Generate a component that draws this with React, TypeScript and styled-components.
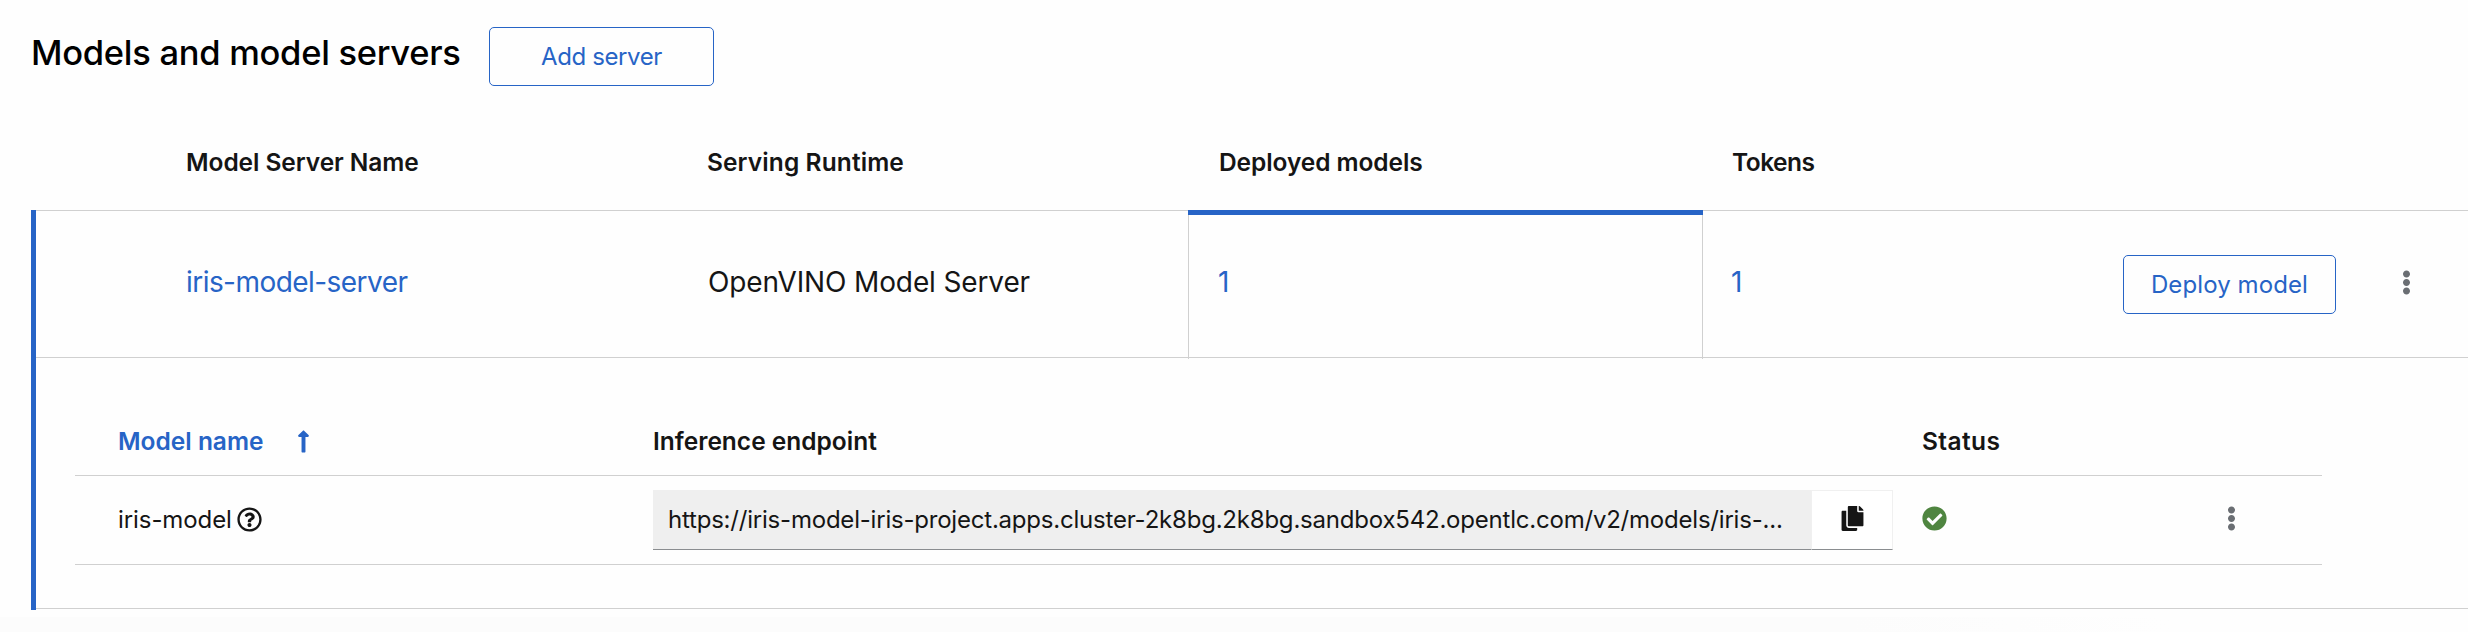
import React from "react";
import styled, { createGlobalStyle } from "styled-components";
import {
  FaCheckCircle,
  FaCopy,
  FaEllipsisV,
  FaLongArrowAltUp,
  FaRegQuestionCircle,
} from "react-icons/fa";

const blue = "#2764c6";
const ink = "#151515";
const rule = "#d0d0d0";

const GlobalStyle = createGlobalStyle`
  *, *::before, *::after { box-sizing: border-box; }
  body {
    margin: 0;
    background: #fefefe;
    color: ${ink};
    font-family: Inter, "Liberation Sans", sans-serif;
    overflow: hidden;
  }
  svg { display: block; flex: none; }
`;

const Page = styled.main`
  display: flex;
  flex-direction: column;
  width: 2468px;
  height: 632px;
`;

const TitleBar = styled.header`
  display: flex;
  align-items: flex-start;
  height: 114px;
  padding: 27px 0 0 31px;
`;

const Title = styled.h2`
  width: 458px;
  margin: 0;
  color: #000;
  font-size: 34.5px;
  font-weight: 500;
  line-height: 51px;
  letter-spacing: -0.28px;
  white-space: nowrap;
`;

const OutlineButton = styled.button<{ $width: number; $spacing?: number }>`
  width: ${(p) => p.$width}px;
  height: 59px;
  padding: 0;
  border: 1px solid ${blue};
  border-radius: 5px;
  background: transparent;
  color: ${blue};
  font: 400 24px/57px Inter, "Liberation Sans", sans-serif;
  letter-spacing: ${(p) => p.$spacing ?? 0}px;
  white-space: nowrap;
`;

const columns = "641px 511px 515px 420px 1fr";

const ServerHead = styled.div`
  display: grid;
  grid-template-columns: ${columns};
  height: 96px;
  padding-left: 36px;
`;

const HeadCell = styled.div<{ $pad?: number; $spacing?: number; $active?: boolean }>`
  display: flex;
  align-items: center;
  padding-left: ${(p) => p.$pad ?? 0}px;
  color: ${(p) => (p.$active ? blue : ink)};
  font-size: 24.5px;
  font-weight: 600;
  line-height: 36px;
  letter-spacing: ${(p) => p.$spacing ?? 0}px;
  white-space: nowrap;
`;

const ServerGroup = styled.section`
  height: 400px;
  margin-left: 31px;
  border-left: 5px solid ${blue};
`;

const ServerRow = styled.div`
  display: grid;
  grid-template-columns: ${columns};
  height: 148px;
  border-top: 1px solid ${rule};
  border-bottom: 1px solid ${rule};
`;

const ServerCell = styled.div<{ $pad: number; $link?: boolean; $spacing?: number }>`
  display: flex;
  align-items: center;
  padding: 0 0 4px ${(p) => p.$pad}px;
  color: ${(p) => (p.$link ? blue : ink)};
  font-size: 28px;
  letter-spacing: ${(p) => p.$spacing ?? 0}px;
  white-space: nowrap;
`;

const SelectedCell = styled(ServerCell)`
  position: relative;
  margin-bottom: -2px;
  padding-bottom: 6px;
  border: solid ${rule};
  border-width: 0 1px;

  &::before {
    content: "";
    position: absolute;
    top: -1px;
    left: -1px;
    right: -1px;
    height: 5px;
    background: ${blue};
  }
`;

const RowActions = styled.div`
  display: flex;
  align-items: center;
`;

const Kebab = styled.div<{ $left?: number }>`
  display: flex;
  padding: 0 0 4px ${(p) => p.$left ?? 0}px;
  color: #6a6e73;
`;

const ModelPanel = styled.div`
  height: 251px;
  padding: 49px 0 0 39px;
  border-bottom: 1px solid ${rule};
`;

const ModelTable = styled.div`
  width: 2247px;
`;

const ModelLine = styled.div<{ $height: number }>`
  display: grid;
  grid-template-columns: 535px 1269px 297px 1fr;
  align-items: center;
  height: ${(p) => p.$height}px;
  padding-left: 43px;
  border-bottom: 1px solid ${rule};
`;

const SortIcon = styled.span`
  display: flex;
  margin-left: 28px;
`;

const ModelName = styled.div`
  display: flex;
  align-items: center;
  gap: 5px;
  padding-bottom: 2px;
  font-size: 24px;
  letter-spacing: -0.08px;
`;

const ClipboardCopy = styled.div`
  display: flex;
  width: 1240px;
  height: 60px;
`;

const Endpoint = styled.div`
  flex: 1;
  padding-left: 15px;
  border-bottom: 1px solid #8a8d90;
  background: #efefef;
  font-size: 24px;
  line-height: 59px;
  letter-spacing: -0.21px;
  white-space: nowrap;
`;

const CopyButton = styled.div`
  display: flex;
  align-items: center;
  justify-content: center;
  width: 82px;
  padding-bottom: 3px;
  border: 1px solid #f0f0f0;
  border-bottom-color: #8a8d90;
  background: #fff;
`;

const Status = styled.div`
  display: flex;
  padding-bottom: 3px;
  color: #4f8540;
`;

const BottomShade = styled.div`
  height: 15px;
  margin-top: 7px;
  background: linear-gradient(90deg, #fcfcfc 75%, #fefefe 88%);
`;

export default function App() {
  return (
    <>
      <GlobalStyle />
      <Page>
        <TitleBar>
          <Title>Models and model servers</Title>
          <OutlineButton $width={225} $spacing={-0.38}>Add server</OutlineButton>
        </TitleBar>

        <ServerHead>
          <HeadCell $pad={150} $spacing={-0.07}>Model Server Name</HeadCell>
          <HeadCell $pad={30} $spacing={0.1}>Serving Runtime</HeadCell>
          <HeadCell $pad={31} $spacing={-0.08}>Deployed models</HeadCell>
          <HeadCell $pad={29} $spacing={-0.5}>Tokens</HeadCell>
        </ServerHead>

        <ServerGroup>
          <ServerRow>
            <ServerCell $pad={150} $link $spacing={-0.55}>iris-model-server</ServerCell>
            <ServerCell $pad={31} $spacing={-0.13}>OpenVINO Model Server</ServerCell>
            <SelectedCell $pad={29} $link>1</SelectedCell>
            <ServerCell $pad={28} $link>1</ServerCell>
            <RowActions>
              <OutlineButton $width={213} $spacing={0.1}>Deploy model</OutlineButton>
              <Kebab $left={58}>
                <FaEllipsisV size={25} />
              </Kebab>
            </RowActions>
          </ServerRow>

          <ModelPanel>
            <ModelTable>
              <ModelLine $height={69}>
                <HeadCell $active>
                  Model name
                  <SortIcon>
                    <FaLongArrowAltUp size={25} />
                  </SortIcon>
                </HeadCell>
                <HeadCell>Inference endpoint</HeadCell>
                <HeadCell $spacing={0.4}>Status</HeadCell>
              </ModelLine>
              <ModelLine $height={89}>
                <ModelName>
                  iris-model
                  <FaRegQuestionCircle size={25} />
                </ModelName>
                <ClipboardCopy>
                  <Endpoint>
                    https://iris-model-iris-project.apps.cluster-2k8bg.2k8bg.sandbox542.opentlc.com/v2/models/iris-...
                  </Endpoint>
                  <CopyButton>
                    <FaCopy size={25} />
                  </CopyButton>
                </ClipboardCopy>
                <Status>
                  <FaCheckCircle size={25} />
                </Status>
                <Kebab>
                  <FaEllipsisV size={25} />
                </Kebab>
              </ModelLine>
            </ModelTable>
          </ModelPanel>
        </ServerGroup>
        <BottomShade />
      </Page>
    </>
  );
}
